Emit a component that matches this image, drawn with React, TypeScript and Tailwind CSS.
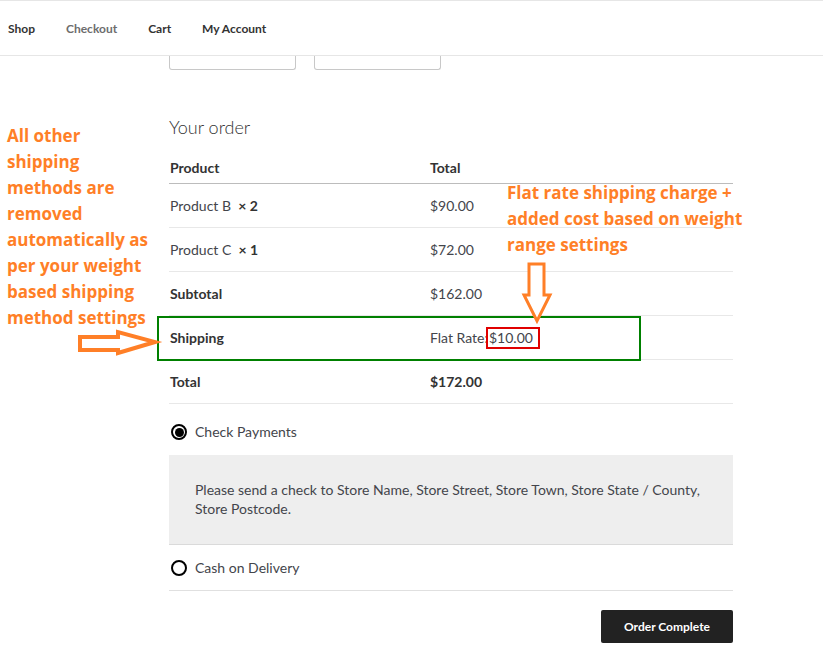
import React from "react";

function Radio({ checked }: { checked?: boolean }) {
  return (
    <span className="w-[16px] h-[16px] rounded-full border-2 border-black flex items-center justify-center bg-white">
      {checked && <span className="w-[9px] h-[9px] rounded-full bg-black" />}
    </span>
  );
}

function Row({ label, value, bold, labelBold }: { label: React.ReactNode; value: React.ReactNode; bold?: boolean; labelBold?: boolean }) {
  return (
    <div className="flex h-[44px] items-center border-b border-[#e8e8e8]">
      <div className={`w-[261px] pl-[1px] ${labelBold ? "font-bold text-[#333]" : ""}`}>{label}</div>
      <div className={bold ? "font-bold text-[#333]" : ""}>{value}</div>
    </div>
  );
}

export default function App() {
  return (
    <div className="relative w-[823px] h-[655px] bg-white overflow-hidden font-['Lato',sans-serif] text-[14px] text-[#43454b]">
      <nav className="h-[56px] border-t border-b border-[#e6e6e6] flex items-center gap-[31px] px-[8px] pt-[1px] text-[12px] font-bold text-[#333]">
        <span>Shop</span>
        <span className="text-[#6d6d6d]">Checkout</span>
        <span>Cart</span>
        <span>My Account</span>
      </nav>
      <div className="ml-[169px] w-[564px] flex flex-col">
        <div className="flex gap-[18px]">
          <div className="w-[127px] h-[14px] border border-t-0 border-[#c8c8c8] rounded-b-[3px]" />
          <div className="w-[127px] h-[14px] border border-t-0 border-[#c8c8c8] rounded-b-[3px]" />
        </div>
        <h2 className="mt-[45px] text-[18px] leading-[24px] font-light text-[#333]">Your order</h2>
        <div className="mt-[11px] flex h-[34px] items-center pt-[1px] border-b border-[#bcbcbc] font-bold text-[#333]">
          <div className="w-[261px] pl-[1px]">Product</div>
          <div>Total</div>
        </div>
        <Row label={<>Product B&nbsp; <b className="text-[#333]">× 2</b></>} value="$90.00" />
        <Row label={<>Product C&nbsp; <b className="text-[#333]">× 1</b></>} value="$72.00" />
        <Row label="Subtotal" labelBold value="$162.00" />
        <Row
          label="Shipping"
          labelBold
          value={
            <>
              Flat Rate:
              <span className="inline-block -ml-[2px] border-2 border-[#e00000] pl-[1px] pr-[5px] leading-[18px]">$10.00</span>
            </>
          }
        />
        <Row label="Total" labelBold value="$172.00" bold />
        <div className="h-[51px] flex items-start pt-[20px] gap-[8px] pl-[2px]">
          <Radio checked />
          <span className="leading-[16px]">Check Payments</span>
        </div>
        <div className="bg-[#eeeeee] border-b border-[#dadada] h-[90px] pt-[25px] px-[26px] leading-[19px]">
          Please send a check to Store Name, Store Street, Store Town, Store State / County,
          <br />
          Store Postcode.
        </div>
        <div className="h-[46px] flex items-center gap-[8px] pl-[2px] border-b border-[#e0e0e0]">
          <Radio />
          <span>Cash on Delivery</span>
        </div>
        <div className="flex justify-end mt-[19px]">
          <button className="w-[132px] h-[33px] bg-[#222] rounded-[2px] text-white font-bold text-[12px]">Order Complete</button>
        </div>
      </div>

      {/* annotations */}
      <div className="absolute left-[7px] top-[123px] font-['Open_Sans',sans-serif] font-bold text-[17px] leading-[26px] text-[#ff7f27]">
        All other<br />shipping<br />methods are<br />removed<br />automatically as<br />per your weight<br />based shipping<br />method settings
      </div>
      <div className="absolute left-[507px] top-[180px] font-['Open_Sans',sans-serif] font-bold text-[17px] leading-[26px] text-[#ff7f27]">
        Flat rate shipping charge +<br />added cost based on weight<br />range settings
      </div>
      <div className="absolute left-[157px] top-[316px] w-[484px] h-[45px] border-2 border-[#008000]" />
      <svg className="absolute left-0 top-0 pointer-events-none" width="823" height="655">
        <polygon points="529,264 544,264 544,295 550,295 537,321 524,295 529,295" fill="white" stroke="#ff7f27" strokeWidth="3" strokeLinejoin="miter" />
        <polygon points="80,337 118,337 118,332 155,342 118,353 118,350 80,350" fill="white" stroke="#ff7f27" strokeWidth="4" strokeLinejoin="miter" />
      </svg>
    </div>
  );
}
